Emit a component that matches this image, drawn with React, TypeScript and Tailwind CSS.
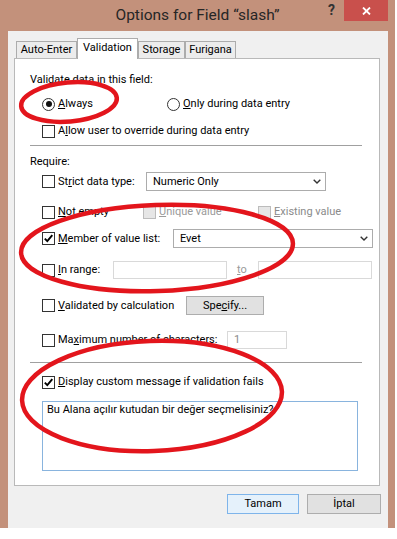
import React from "react";

const U = ({ children }: { children: React.ReactNode }) => (
  <span className="underline decoration-1 underline-offset-[1px]">{children}</span>
);

const Check = ({ checked = false, disabled = false }: { checked?: boolean; disabled?: boolean }) => (
  <span
    className={
      disabled
        ? "w-[13px] h-[13px] shrink-0 border border-[#bcbcbc] bg-[#e6e6e6] flex items-center justify-center"
        : "w-[13px] h-[13px] shrink-0 border border-[#333333] bg-white flex items-center justify-center"
    }
  >
    {checked && (
      <svg width="11" height="11" viewBox="0 0 11 11">
        <path d="M1.8 5.6 L4.3 8.2 L9.3 2.2" stroke="#000" strokeWidth="1.9" fill="none" />
      </svg>
    )}
  </span>
);

const Radio = ({ on = false }: { on?: boolean }) => (
  <span className="w-[13px] h-[13px] shrink-0 rounded-full border border-[#333333] bg-white flex items-center justify-center">
    {on && <span className="w-[6px] h-[6px] rounded-full bg-[#111]" />}
  </span>
);

const Chevron = () => (
  <svg width="8" height="5" viewBox="0 0 8 5">
    <path d="M0.7 0.7 L4 4 L7.3 0.7" stroke="#333" strokeWidth="1.4" fill="none" />
  </svg>
);

export default function App() {
  return (
    <div className="relative w-[397px] h-[539px] bg-white font-[Roboto,sans-serif] text-[11px] leading-[14px] text-black overflow-hidden whitespace-nowrap">
      <div className="w-[395px] h-[528px] bg-[#c3917b] flex flex-col">
        {/* Title bar */}
        <div className="h-[31px] grid grid-cols-[1fr_auto_1fr] shrink-0">
          <div />
          <div className="flex items-center text-[15.5px] text-[#262626] pb-[1px]">Options for Field “slash”</div>
          <div className="flex justify-end items-start pr-[7px]">
            <span className="mt-[2px] mr-[9px] text-[14px] font-bold text-[#333] leading-[16px]">?</span>
            <div className="w-[44px] h-[21px] bg-[#c9504c] flex items-center justify-center">
              <svg width="9" height="8" viewBox="0 0 9 8">
                <path d="M1 0.5 L8 7.5 M8 0.5 L1 7.5" stroke="#fff" strokeWidth="1.8" />
              </svg>
            </div>
          </div>
        </div>

        {/* Client area */}
        <div className="mx-[8px] mr-[7px] flex-1 bg-[#f0f0f0] flex flex-col pt-[7px] pl-[6px] pr-[7px]">
          {/* Tabs */}
          <div className="flex items-end h-[20px] pl-[2px]">
            <div className="w-[61px] h-[17px] border-t border-x border-[#acacac] bg-[#ececec] flex items-center justify-center">
              Auto-Enter
            </div>
            <div className="relative z-10 w-[61px] h-[21px] -mb-px border-t border-x border-[#acacac] bg-white flex items-center justify-center pb-[2px]">
              Validation
            </div>
            <div className="w-[47px] h-[17px] border-t border-x border-[#acacac] bg-[#ececec] flex items-center justify-center">
              Storage
            </div>
            <div className="w-[51px] h-[17px] border-t border-x border-[#acacac] bg-[#ececec] flex items-center justify-center">
              Furigana
            </div>
          </div>

          {/* Panel */}
          <div className="w-[366px] h-[428px] border border-[#b9b9b9] bg-white flex flex-col pl-[15px] pr-[17px]">
            <div className="mt-[14px] h-[14px] flex items-center">Validate data in this field:</div>

            <div className="mt-[10px] h-[14px] flex items-center pl-[12px]">
              <div className="w-[125px] shrink-0 flex items-center">
                <Radio on />
                <span className="ml-[3px]">
                  <U>A</U>lways
                </span>
              </div>
              <Radio />
              <span className="ml-[3px]">
                <U>O</U>nly during data entry
              </span>
            </div>

            <div className="mt-[13px] h-[14px] flex items-center pl-[12px]">
              <Check />
              <span className="ml-[3px]">
                A<U>l</U>low user to override during data entry
              </span>
            </div>

            <div className="mt-[7px] h-px shrink-0 bg-[#a0a0a0]" />

            <div className="mt-[9px] h-[14px] flex items-center">Require:</div>

            <div className="mt-[3px] h-[19px] flex items-center pl-[12px]">
              <div className="w-[104px] shrink-0 flex items-center">
                <Check />
                <span className="ml-[3px]">
                  St<U>r</U>ict data type:
                </span>
              </div>
              <div className="w-[180px] shrink-0 h-[19px] border border-[#acacac] bg-white flex items-center pl-[6px] pr-[4px]">
                <span className="flex-1">Numeric Only</span>
                <Chevron />
              </div>
            </div>

            <div className="mt-[14px] h-[14px] flex items-center pl-[12px]">
              <div className="w-[101px] shrink-0 flex items-center">
                <Check />
                <span className="ml-[3px]">
                  <U>N</U>ot empty
                </span>
              </div>
              <div className="w-[115px] shrink-0 flex items-center">
                <Check disabled />
                <span className="ml-[3px] text-[#9a9a9a]">
                  <U>U</U>nique value
                </span>
              </div>
              <Check disabled />
              <span className="ml-[3px] text-[#8a8a8a]">
                <U>E</U>xisting value
              </span>
            </div>

            <div className="mt-[10px] h-[19px] flex items-center pl-[12px]">
              <div className="w-[131px] shrink-0 flex items-center">
                <Check checked />
                <span className="ml-[3px]">
                  <U>M</U>ember of value list:
                </span>
              </div>
              <div className="w-[200px] shrink-0 h-[19px] border border-[#acacac] bg-white flex items-center pl-[6px] pr-[4px]">
                <span className="flex-1">Evet</span>
                <Chevron />
              </div>
            </div>

            <div className="mt-[13px] h-[18px] flex items-center pl-[12px]">
              <div className="w-[71px] shrink-0 flex items-center">
                <Check />
                <span className="ml-[3px]">
                  <U>I</U>n range:
                </span>
              </div>
              <div className="w-[114px] shrink-0 h-[18px] border border-[#d9d9d9] bg-white" />
              <div className="w-[31px] shrink-0 pl-[10px] text-[#9a9a9a]">
                <U>t</U>o
              </div>
              <div className="w-[114px] shrink-0 h-[18px] border border-[#d9d9d9] bg-white" />
            </div>

            <div className="mt-[17px] h-[19px] flex items-center pl-[12px]">
              <div className="w-[144px] shrink-0 flex items-center">
                <Check />
                <span className="ml-[3px]">
                  <U>V</U>alidated by calculation
                </span>
              </div>
              <div className="w-[78px] shrink-0 h-[19px] border border-[#adadad] bg-[#e1e1e1] flex items-center justify-center">
                Spe<U>c</U>ify...
              </div>
            </div>

            <div className="mt-[16px] h-[18px] flex items-center pl-[12px]">
              <div className="w-[185px] shrink-0 flex items-center">
                <Check />
                <span className="ml-[3px]">
                  Ma<U>x</U>imum number of characters:
                </span>
              </div>
              <div className="w-[60px] shrink-0 h-[18px] border border-[#d9d9d9] bg-white flex items-center pl-[6px] text-[#8a8a8a]">
                1
              </div>
            </div>

            <div className="mt-[13px] h-px shrink-0 bg-[#a0a0a0]" />

            <div className="mt-[12px] h-[14px] flex items-center pl-[12px]">
              <Check checked />
              <span className="ml-[3px]">
                <U>D</U>isplay custom message if validation fails
              </span>
            </div>

            <div className="mt-[12px] ml-[12px] w-[316px] h-[70px] shrink-0 border border-[#89b4de] bg-white pt-[1px] pl-[4px]">
              Bu Alana açılır kutudan bir değer seçmelisiniz?
            </div>
          </div>

          {/* Buttons */}
          <div className="mt-[8px] h-[20px] flex justify-end gap-[8px]">
            <div className="w-[72px] h-[20px] border border-[#7eb4ea] bg-[#e5f1fb] flex items-center justify-center">
              Tamam
            </div>
            <div className="w-[74px] h-[20px] border border-[#adadad] bg-[#e1e1e1] flex items-center justify-center">
              İptal
            </div>
          </div>
        </div>
      </div>

      {/* Red annotation ellipses */}
      <svg className="absolute inset-0 pointer-events-none" width="397" height="539" viewBox="0 0 397 539">
        <ellipse cx="69" cy="102" rx="48" ry="19.5" transform="rotate(-5 69 102)" fill="none" stroke="#e3151c" strokeWidth="4.5" />
        <ellipse cx="157" cy="248" rx="136" ry="43" transform="rotate(-2 157 248)" fill="none" stroke="#e3151c" strokeWidth="4.5" />
        <ellipse cx="152" cy="396" rx="130" ry="55" transform="rotate(-2 152 396)" fill="none" stroke="#e3151c" strokeWidth="4.5" />
      </svg>
    </div>
  );
}
